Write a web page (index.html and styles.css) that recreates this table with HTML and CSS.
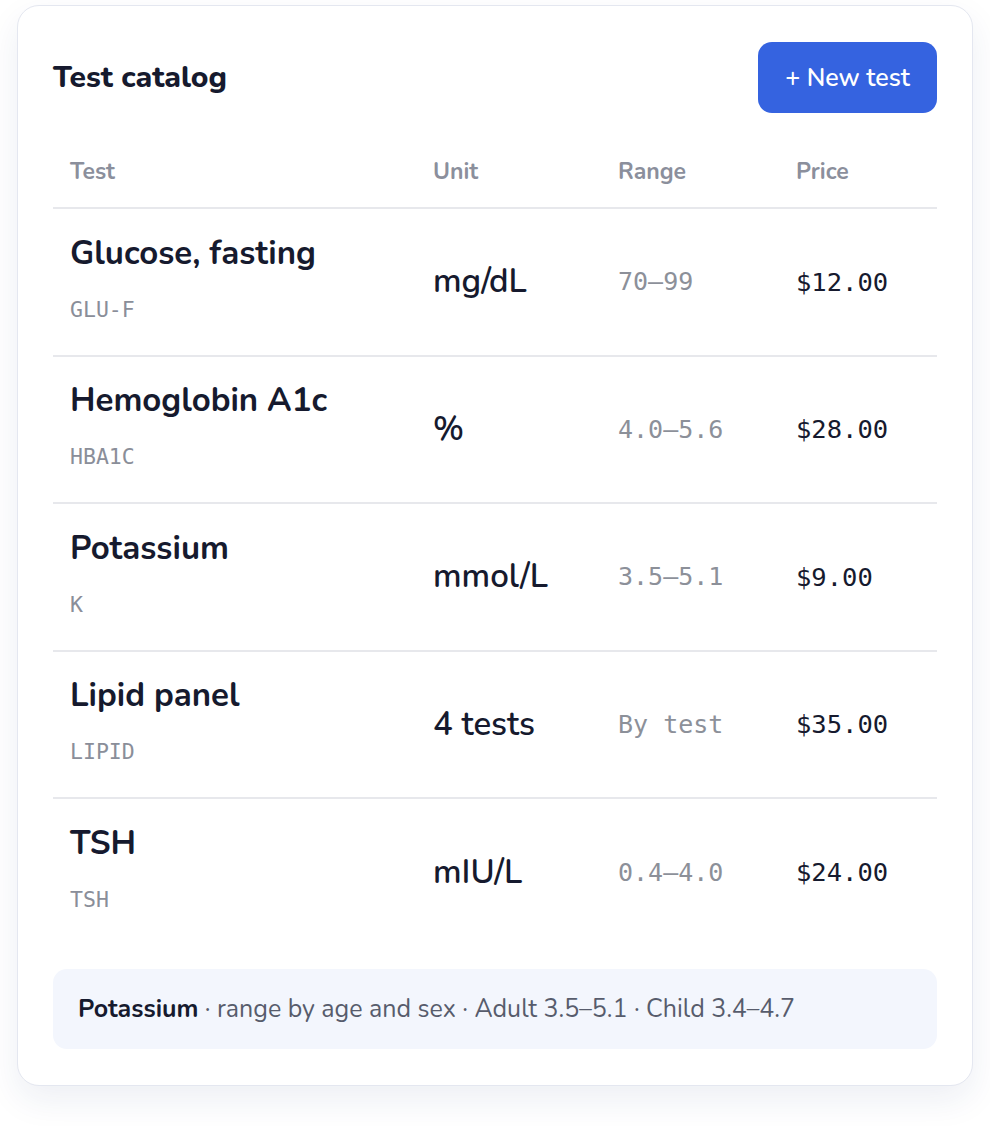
FILE: index.html
```html
<!DOCTYPE html>
<html>
<head>
<meta charset="utf-8">
<link rel="stylesheet" href="styles.css">
</head>
<body>
<div class="card">
  <div class="head">
    <h1 class="title">Test catalog</h1>
    <button class="btn">+ New test</button>
  </div>
  <table class="tbl">
    <thead>
      <tr><th class="c-test">Test</th><th class="c-unit">Unit</th><th class="c-range">Range</th><th class="c-price">Price</th></tr>
    </thead>
    <tbody>
      <tr><td><div class="name">Glucose, fasting</div><div class="code">GLU-F</div></td><td class="unit">mg/dL</td><td class="range">70–99</td><td class="price">$12.00</td></tr>
      <tr><td><div class="name">Hemoglobin A1c</div><div class="code">HBA1C</div></td><td class="unit">%</td><td class="range">4.0–5.6</td><td class="price">$28.00</td></tr>
      <tr><td><div class="name">Potassium</div><div class="code">K</div></td><td class="unit">mmol/L</td><td class="range">3.5–5.1</td><td class="price">$9.00</td></tr>
      <tr><td><div class="name">Lipid panel</div><div class="code">LIPID</div></td><td class="unit">4 tests</td><td class="range">By test</td><td class="price">$35.00</td></tr>
      <tr><td><div class="name">TSH</div><div class="code">TSH</div></td><td class="unit">mIU/L</td><td class="range">0.4–4.0</td><td class="price">$24.00</td></tr>
    </tbody>
  </table>
  <div class="note"><b>Potassium</b> · range by age and sex · Adult 3.5–5.1 · Child 3.4–4.7</div>
</div>
</body>
</html>
```
FILE: styles.css
```css
* { box-sizing: border-box; }
html, body { margin: 0; background: #ffffff; }
body {
  padding: 5px 17px 40px;
  font-family: "Nunito", Inter, "Noto Sans", sans-serif;
  color: #161a2e;
}
.card {
  background: #fff;
  border: 1px solid #e4e7f0;
  border-radius: 22px;
  box-shadow: 0 14px 34px rgba(30, 45, 110, 0.08);
  padding: 36px 35px 36px;
}
.head {
  display: flex;
  justify-content: space-between;
  align-items: center;
}
.title {
  margin: 0;
  font-size: 30px;
  font-weight: 800;
}
.btn {
  font-family: inherit;
  background: #3563e0;
  color: #fff;
  border: 0;
  border-radius: 14px;
  height: 71px;
  width: 179px;
  font-size: 25px;
  font-weight: 600;
}
.tbl {
  width: 100%;
  border-collapse: collapse;
  margin-top: 22px;
  table-layout: fixed;
}
.c-test { width: 363px; }
.c-unit { width: 185px; }
.c-range { width: 178px; }
th {
  text-align: left;
  font-size: 23px;
  font-weight: 700;
  color: #8b8f9c;
  padding: 0 17px;
  height: 73px;
  border-bottom: 2px solid #e7e8ec;
}
td {
  padding: 0 17px;
  height: 147.5px;
  border-bottom: 2px solid #e7e8ec;
  vertical-align: middle;
}
tbody tr:last-child td { border-bottom: 0; }
.name {
  font-size: 33px;
  font-weight: 700;
  line-height: 36px;
  margin-top: -6px;
}
.code {
  font-family: "DejaVu Sans Mono", "Liberation Mono", monospace;
  font-size: 21.5px;
  color: #8a8e99;
  margin-top: 26px;
  line-height: 24px;
}
.unit {
  font-size: 33px;
  font-weight: 600;
}
.range {
  font-family: "DejaVu Sans Mono", "Liberation Mono", monospace;
  font-size: 25px;
  color: #8c9099;
}
.price {
  font-family: "DejaVu Sans Mono", "Liberation Mono", monospace;
  font-size: 25.5px;
  color: #161a2e;
}
.note {
  margin-top: 23px;
  background: #f3f6fd;
  border-radius: 14px;
  padding: 0 25px;
  height: 80px;
  display: flex;
  align-items: center;
  font-size: 25px;
  color: #575c6c;
  white-space: pre;
}
.note b { color: #161a2e; font-weight: 700; }
```
